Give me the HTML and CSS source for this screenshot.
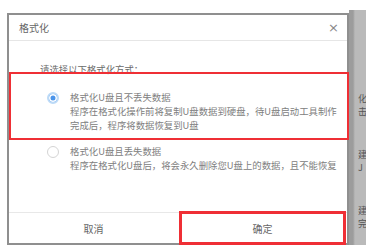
FILE: index.html
```html
<!DOCTYPE html>
<html><head>
<meta charset="utf-8"><title>格式化</title>
<link rel="stylesheet" href="styles.css">
</head>
<body>
<div class="dialog">
  <div class="dlg-head">
    <span class="dlg-title">格式化</span>
    <span class="dlg-close">×</span>
  </div>
  <div class="dlg-body">
    <p class="prompt">请选择以下格式化方式：</p>
    <div class="option">
      <span class="radio checked"></span>
      <div class="opt-text">
        <div>格式化U盘且不丢失数据</div>
        <div>程序在格式化操作前将复制U盘数据到硬盘，待U盘启动工具制作</div>
        <div>完成后，程序将数据恢复到U盘</div>
      </div>
    </div>
    <div class="option second">
      <span class="radio"></span>
      <div class="opt-text">
        <div>格式化U盘且丢失数据</div>
        <div>程序在格式化U盘后，将会永久删除您U盘上的数据，且不能恢复</div>
      </div>
    </div>
  </div>
  <div class="dlg-foot">
    <div class="btn">取消</div>
    <div class="btn">确定</div>
  </div>
</div>
<div class="side">
  <span class="frag first">化</span>
  <span class="frag">击</span>
  <span class="frag gap">建</span>
  <span class="frag">J</span>
  <span class="frag gap">建</span>
  <span class="frag">完</span>
</div>
<div class="mark mark-option"></div>
<div class="mark mark-ok"></div>
</body></html>
```
FILE: styles.css
```css
body {
margin: 0;
padding: 13px 0 0 7px;
background-color: #fff;
display: flex;
align-items: flex-start;
font-family: "Noto Sans CJK SC", "Noto Sans", sans-serif;
color: #777;
font-size: 9.4px;
}
.dialog {
width: 342px;
height: 232px;
box-sizing: border-box;
border: 2px solid #8f8f8f;
background-color: #fff;
display: flex;
flex-direction: column;
}
.dlg-head {
height: 25px;
border-bottom: 1px solid #e6e6e6;
display: flex;
align-items: center;
justify-content: space-between;
padding: 0 8px 0 10px;
}
.dlg-title {
font-size: 10px;
color: #666;
}
.dlg-close {
font-family: "DejaVu Sans", sans-serif;
font-size: 13px;
color: #888;
}
.dlg-body {
padding-top: 21px;
}
.prompt {
margin: 0 0 14px 31px;
line-height: 14px;
color: #6a6a6a;
}
.option {
display: flex;
padding-left: 38px;
line-height: 14px;
}
.option.second {
margin-top: 12px;
}
.radio {
width: 12px;
height: 12px;
box-sizing: border-box;
border: 1px solid #d4d4d4;
border-radius: 50%;
margin: 2px 11px 0 0;
flex: none;
background-color: #fff;
}
.radio.checked {
border: 2px solid #bcdaf7;
background-color: #4a94ea;
box-shadow: inset 0 0 0 1.5px #fff;
}
.opt-text {
color: #808080;
}
.dlg-foot {
margin-top: auto;
height: 30px;
border-top: 1px solid #e8e8e8;
display: flex;
}
.btn {
flex: 1;
display: flex;
align-items: center;
justify-content: center;
font-size: 10px;
color: #666;
}
.side {
width: 17px;
height: 235px;
margin-top: -3px;
background: linear-gradient(to right, #9c9c9c 0, #9c9c9c 4px, #bababa 6px);
display: flex;
flex-direction: column;
align-items: flex-end;
overflow: hidden;
box-sizing: border-box;
font-size: 9px;
line-height: 13px;
color: #555;
}
.frag {
display: block;
width: 8px;
overflow: hidden;
}
.frag.first {
margin-top: 82px;
}
.frag.gap {
margin-top: 30px;
}
.mark {
position: absolute;
border: 2px solid #ef2f35;
box-sizing: border-box;
}
.mark-option {
left: 9px;
top: 72px;
width: 340px;
height: 68px;
}
.mark-ok {
left: 179px;
top: 211px;
width: 167px;
height: 34px;
border-width: 3px;
}
```
